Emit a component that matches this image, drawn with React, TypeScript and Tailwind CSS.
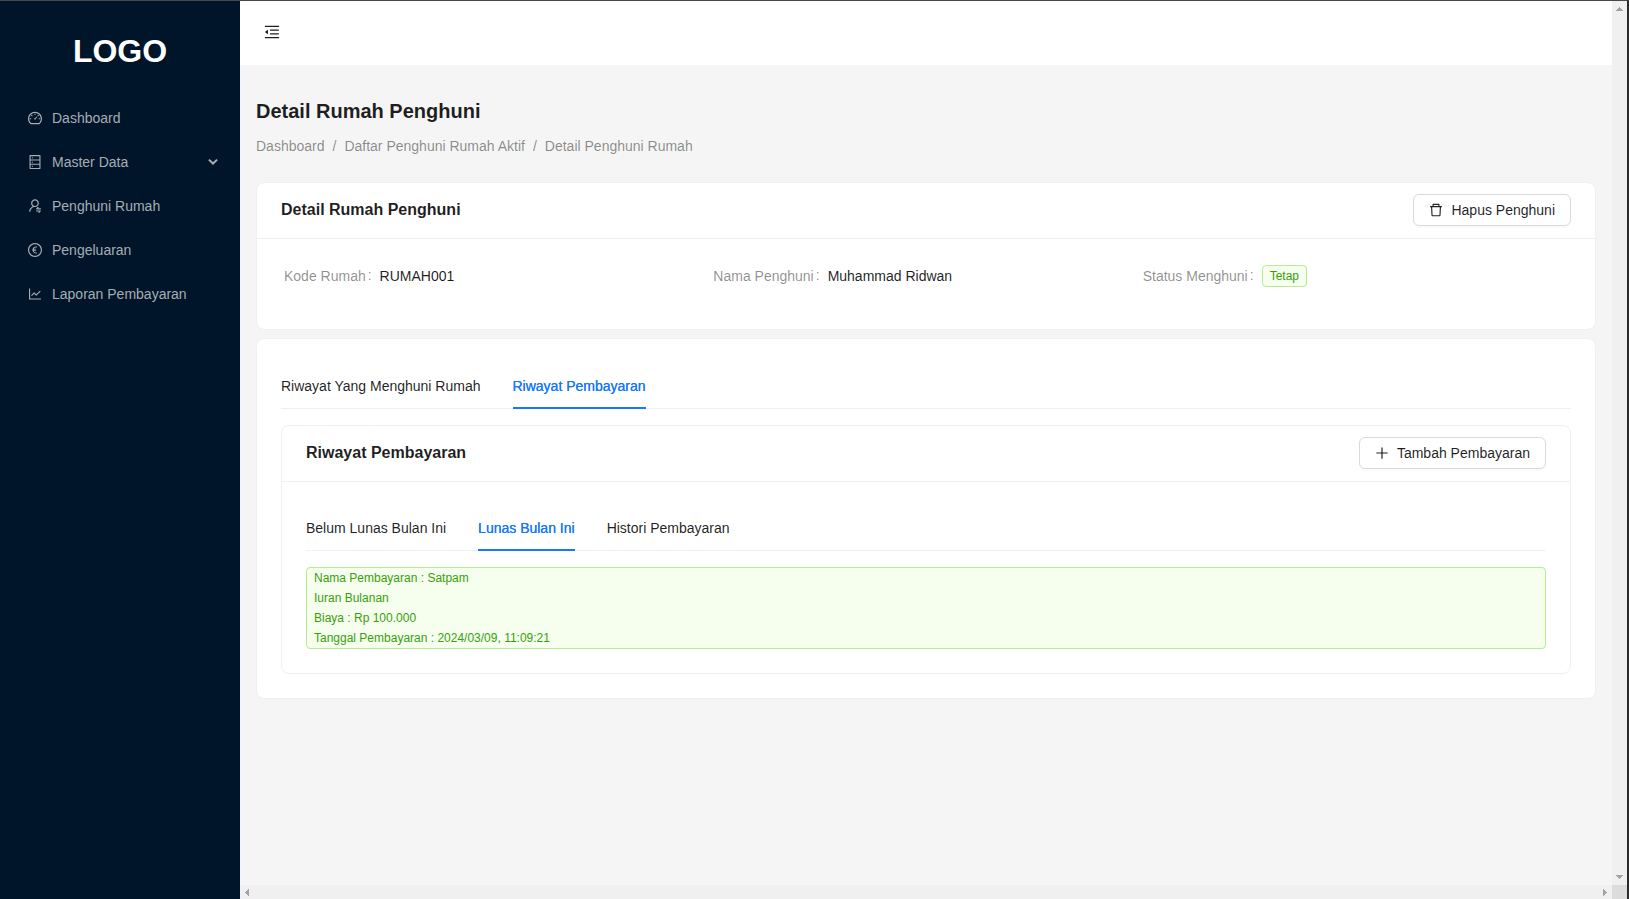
import type { ReactNode } from "react";
import type { IconType } from "react-icons";
import {
  AiOutlineDashboard,
  AiOutlineDatabase,
  AiOutlineDelete,
  AiOutlineEuroCircle,
  AiOutlineLineChart,
  AiOutlineMenuFold,
  AiOutlinePlus,
  AiOutlineUserSwitch,
} from "react-icons/ai";

const ICON_BOX = "64 64 896 896";

const menu: { label: string; icon: IconType; expandable?: boolean }[] = [
  { label: "Dashboard", icon: AiOutlineDashboard },
  { label: "Master Data", icon: AiOutlineDatabase, expandable: true },
  { label: "Penghuni Rumah", icon: AiOutlineUserSwitch },
  { label: "Pengeluaran", icon: AiOutlineEuroCircle },
  { label: "Laporan Pembayaran", icon: AiOutlineLineChart },
];

function Sidebar() {
  return (
    <aside className="flex w-[240px] shrink-0 flex-col bg-[#001529]">
      <div className="mt-[30px] text-center text-[32px] leading-10 font-bold text-white">LOGO</div>
      <nav className="mt-[27px] flex flex-col gap-1">
        {menu.map(({ label, icon: Icon, expandable }) => (
          <a key={label} className="flex h-10 items-center pr-[22px] pl-7 text-[#a6adb4]">
            <Icon size={14} viewBox={ICON_BOX} strokeWidth={0} />
            <span className="ml-2.5 flex-1">{label}</span>
            {expandable && (
              <svg className="mb-px" width="10" height="8" viewBox="0 0 10 8" fill="none" stroke="currentColor" strokeWidth="2">
                <path d="M0.9 1.6 5 5.5 9.1 1.6" />
              </svg>
            )}
          </a>
        ))}
      </nav>
    </aside>
  );
}

function Button({ icon: Icon, children }: { icon: IconType; children: ReactNode }) {
  return (
    <button className="flex h-8 items-center gap-2 rounded-md border border-[#d9d9d9] bg-white px-[15px] shadow-[0_2px_0_rgba(0,0,0,0.02)]">
      <Icon size={14} viewBox={ICON_BOX} strokeWidth={0} />
      <span>{children}</span>
    </button>
  );
}

function CardHead({ title, action }: { title: string; action: ReactNode }) {
  return (
    <div className="flex h-14 items-center justify-between border-b border-[#f0f0f0] px-6 pb-px">
      <h2 className="-mt-px text-base font-bold">{title}</h2>
      {action}
    </div>
  );
}

function Tabs({ items, active }: { items: string[]; active: string }) {
  return (
    <div className="mb-4 flex h-[46px] gap-8 border-b border-[#f0f0f0]">
      {items.map((item) =>
        item === active ? (
          <div
            key={item}
            className="-mb-px border-b-2 border-[#1677ff] pt-3 text-[#1677ff] [text-shadow:0_0_0.25px_currentColor]"
          >
            {item}
          </div>
        ) : (
          <div key={item} className="pt-3">{item}</div>
        )
      )}
    </div>
  );
}

function Field({ label, children }: { label: string; children: ReactNode }) {
  return (
    <div className="flex h-[22px] items-center">
      <span className="text-black/45">{label}</span>
      <span className="mr-2 mb-0.5 ml-0.5 text-black/45">:</span>
      {children}
    </div>
  );
}

function VerticalScrollbar() {
  return (
    <div className="flex w-[15px] shrink-0 flex-col justify-between bg-[#f0f0f0]">
      <svg width="15" height="15" fill="#a3a3a3" shapeRendering="crispEdges">
        <path d="M4 10h7v-1h-1v-1h-1v-1h-1v-1h-1v1h-1v1h-1v1h-1z" />
      </svg>
      <svg width="15" height="15" fill="#a3a3a3" shapeRendering="crispEdges">
        <path d="M4 5h7v1h-1v1h-1v1h-1v1h-1v-1h-1v-1h-1v-1h-1z" />
      </svg>
    </div>
  );
}

function HorizontalScrollbar() {
  return (
    <div className="flex h-[14px] shrink-0 bg-[#f0f0f0]">
      <svg width="15" height="14" fill="#a3a3a3" shapeRendering="crispEdges">
        <path d="M9 4v7h-1v-1h-1v-1h-1v-1h-1v-1h1v-1h1v-1h1v-1z" />
      </svg>
      <div className="flex-1" />
      <svg width="15" height="14" fill="#a3a3a3" shapeRendering="crispEdges">
        <path d="M6 4v7h1v-1h1v-1h1v-1h1v-1h-1v-1h-1v-1h-1v-1z" />
      </svg>
      <div className="w-[15px] bg-[#dcdcdc]" />
    </div>
  );
}

export default function App() {
  return (
    <div className="flex h-[899px] w-[1629px] overflow-hidden border-t border-r-2 border-t-[#484848] border-r-[#2b2b2b] bg-[#f5f5f5] font-['Liberation_Sans',Arial,sans-serif] text-sm leading-[22px] text-black/88">
      <Sidebar />
      <div className="flex min-w-0 flex-1 flex-col">
        <div className="flex min-h-0 flex-1">
          <div className="flex min-w-0 flex-1 flex-col">
            <header className="flex h-16 shrink-0 items-center bg-white pb-0.5 pl-6">
              <AiOutlineMenuFold size={16} viewBox={ICON_BOX} strokeWidth={0} />
            </header>
            <main className="px-4 pt-8">
              <h1 className="text-xl leading-7 font-bold">Detail Rumah Penghuni</h1>
              <div className="mt-2.5 flex gap-2 text-black/45">
                <span>Dashboard</span>
                <span>/</span>
                <span>Daftar Penghuni Rumah Aktif</span>
                <span>/</span>
                <span>Detail Penghuni Rumah</span>
              </div>

              <section className="mt-[25px] h-[148px] rounded-lg border border-[#f0f0f0] bg-white">
                <CardHead
                  title="Detail Rumah Penghuni"
                  action={<Button icon={AiOutlineDelete}>Hapus Penghuni</Button>}
                />
                <div className="mr-[23px] ml-[27px] grid grid-cols-3 pt-[26px]">
                  <Field label="Kode Rumah">RUMAH001</Field>
                  <Field label="Nama Penghuni">Muhammad Ridwan</Field>
                  <Field label="Status Menghuni">
                    <span className="rounded border border-[#b7eb8f] bg-[#f6ffed] px-[7px] text-xs leading-5 text-[#389e0d]">
                      Tetap
                    </span>
                  </Field>
                </div>
              </section>

              <section className="mt-2 rounded-lg border border-[#f0f0f0] bg-white p-6">
                <Tabs items={["Riwayat Yang Menghuni Rumah", "Riwayat Pembayaran"]} active="Riwayat Pembayaran" />
                <div className="rounded-lg border border-[#f0f0f0]">
                  <CardHead
                    title="Riwayat Pembayaran"
                    action={<Button icon={AiOutlinePlus}>Tambah Pembayaran</Button>}
                  />
                  <div className="px-6 pt-[23px] pb-6">
                    <Tabs
                      items={["Belum Lunas Bulan Ini", "Lunas Bulan Ini", "Histori Pembayaran"]}
                      active="Lunas Bulan Ini"
                    />
                    <div className="rounded border border-[#b7eb8f] bg-[#f6ffed] px-[7px] text-xs leading-5 text-[#389e0d]">
                      <p>Nama Pembayaran : Satpam</p>
                      <p>Iuran Bulanan</p>
                      <p>Biaya : Rp 100.000</p>
                      <p>Tanggal Pembayaran : 2024/03/09, 11:09:21</p>
                    </div>
                  </div>
                </div>
              </section>
            </main>
          </div>
          <VerticalScrollbar />
        </div>
        <HorizontalScrollbar />
      </div>
    </div>
  );
}
